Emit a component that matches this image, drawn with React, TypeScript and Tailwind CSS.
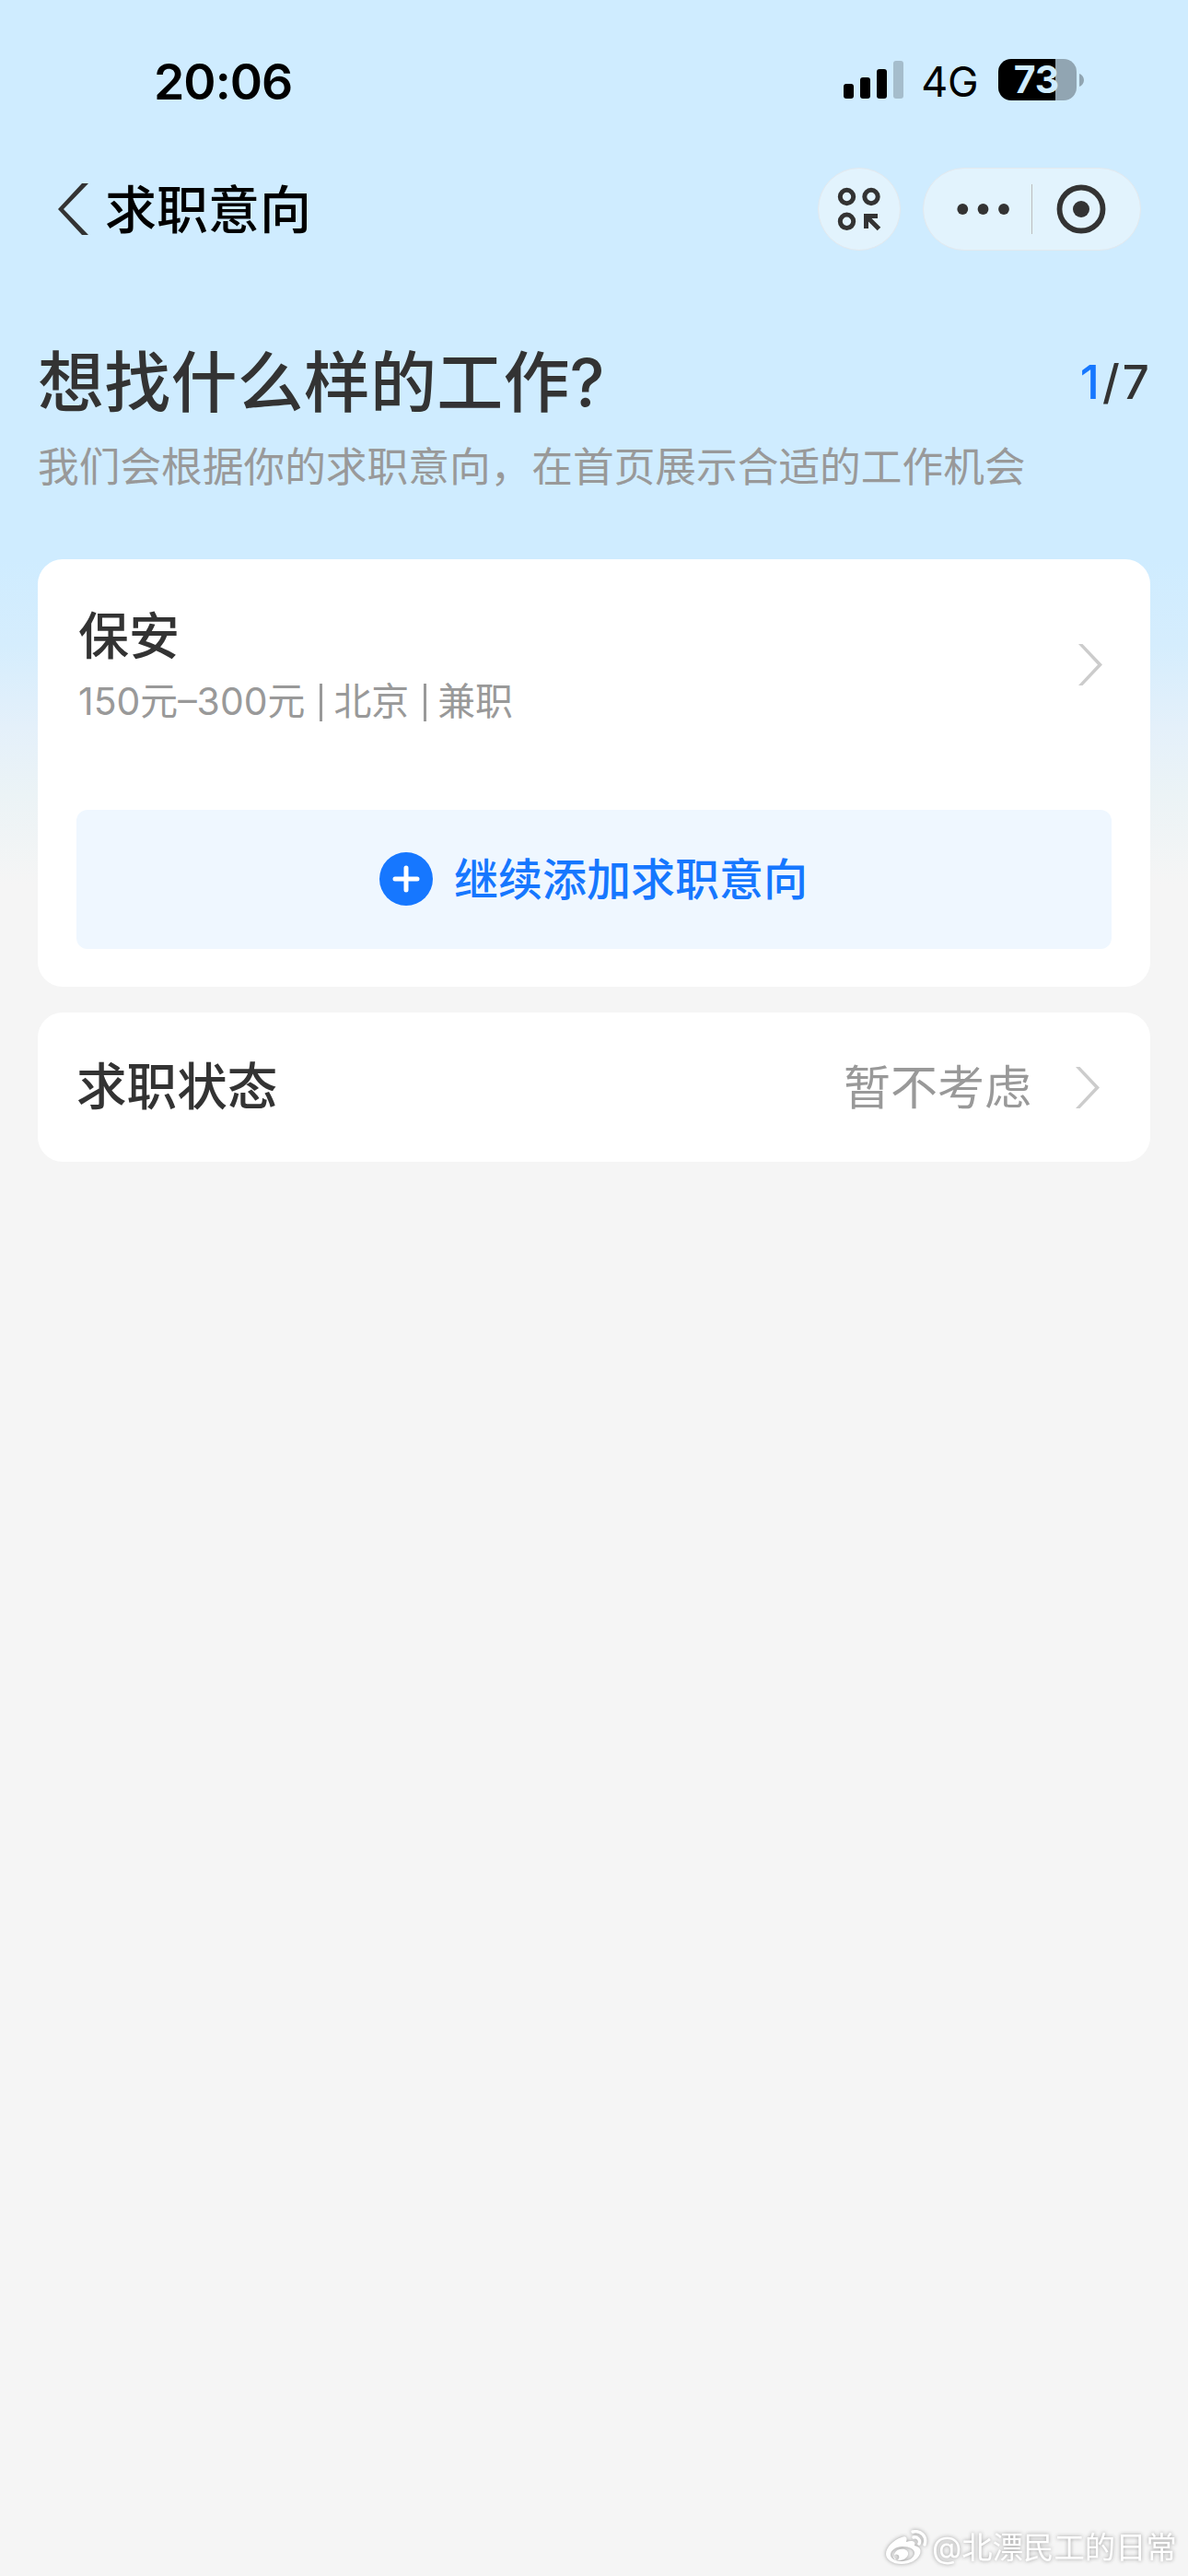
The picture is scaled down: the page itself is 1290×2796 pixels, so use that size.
import type { ReactNode } from "react";

const SignalIcon = () => (
  <svg width={65} height={41} viewBox="0 0 65 41">
    <rect x="0" y="25" width="11" height="16" rx="3" />
    <rect x="18" y="18" width="11" height="23" rx="3" />
    <rect x="36" y="9" width="11" height="32" rx="3" />
    <rect x="54" y="0" width="11" height="41" rx="3" fill="#a5bdcc" />
  </svg>
);

const Battery = ({ level }: { level: number }) => (
  <div className="flex items-center gap-[3px]">
    <div
      className="w-[85px] h-[45px] pr-[2px] rounded-[14px] flex items-center justify-center"
      style={{
        backgroundImage: `linear-gradient(90deg, #000 ${level}%, #91a5b2 ${level}%)`,
      }}
    >
      <span className="text-[41px] font-bold text-[#cfecff]">{level}</span>
    </div>
    <svg width={5} height={14} viewBox="0 0 5 14">
      <path d="M0 0C3 1 5 4 5 7s-2 6-5 7z" fill="#91a5b2" />
    </svg>
  </div>
);

const StatusBar = () => (
  <div className="h-[160px] flex items-start">
    <span className="ml-[167px] mt-[57px] text-[53.5px] leading-[64px] tracking-[-1px] font-semibold">
      20:06
    </span>
    <div className="ml-auto mr-[113px] mt-[64px] h-[45px] flex items-center">
      <SignalIcon />
      <span className="ml-[19px] mr-[22px] mt-[4px] text-[45px] leading-[45px] tracking-[-0.5px]">
        4G
      </span>
      <Battery level={73} />
    </div>
  </div>
);

const GridIcon = () => (
  <svg
    width={48}
    height={48}
    viewBox="0 0 48 48"
    fill="none"
    stroke="#333"
    strokeWidth="5"
  >
    <circle cx="10.5" cy="10.5" r="7.2" />
    <circle cx="37" cy="10.5" r="7.2" />
    <circle cx="10.5" cy="37.3" r="7.2" />
    <path d="M44 31.500H31.500V45M32 32l13.500 13.500" />
  </svg>
);

const NavBar = () => (
  <div className="h-[134px] flex items-center">
    <svg className="ml-[63px]" width={33} height={56} viewBox="0 0 33 56">
      <path d="M26 0h7L6 28l27 28h-7L0 28z" fill="#333" />
    </svg>
    <h1 className="ml-[18px] mt-[2px] text-[56px] leading-[80px] font-medium">
      求职意向
    </h1>
    <button className="ml-auto w-[90px] h-[90px] rounded-full bg-[#e2f3fd] border border-[#e3e9ee] flex items-center justify-center">
      <GridIcon />
    </button>
    <div className="ml-6 mr-[51px] w-[237px] h-[90px] rounded-full bg-[#e2f3fd] border border-[#e3e9ee] flex items-center">
      <svg className="ml-[36px]" width={58} height={12} viewBox="0 0 58 12">
        <circle cx="6.3" cy="6" r="5.9" fill="#333" />
        <circle cx="28.5" cy="6" r="5.9" fill="#333" />
        <circle cx="51" cy="6" r="5.9" fill="#333" />
      </svg>
      <div className="ml-[23px] w-px h-[54px] bg-[#bcbcbc]" />
      <svg className="ml-[26px]" width={54} height={54} viewBox="0 0 54 54">
        <circle
          cx="27"
          cy="27"
          r="23.5"
          fill="none"
          stroke="#333"
          strokeWidth="5.8"
        />
        <circle cx="27" cy="27" r="9" fill="#333" />
      </svg>
    </div>
  </div>
);

const ArrowRight = () => (
  <svg width={26} height={45} viewBox="0 0 26 45">
    <path d="M0 0h4.500L26 22.500 4.500 45H0l21-22.500z" fill="#ccc" />
  </svg>
);

const Card = ({ children }: { children: ReactNode }) => (
  <section className="mx-[41px] rounded-[27px] bg-white">{children}</section>
);

const Separator = () => (
  <div className="ml-4 mr-3 w-[3px] h-[41px] bg-[#999]" />
);

const WeiboIcon = () => (
  <svg width={45} height={38} viewBox="0 0 45 38" fill="#fff">
    <path
      fillRule="evenodd"
      d="M17 8c4-2 7 0 5 5 6-2 11-1 9 4 5 1 8 4 6 9-3 7-11 11-20 11C7 37 0 32 0 26 0 19 8 11 17 8zm1 10C11 18 5 22 5 27c0 4 5 7 12 7 8 0 14-4 14-9 0-4-5-7-13-7z"
    />
    <path
      fillRule="evenodd"
      d="M16 21c5-1 9 2 8 6-1 3-5 6-9 6s-7-3-6-6c1-4 4-6 7-6zm-3 6a3 3 0 1 0 0 5 3 3 0 0 0 0-5z"
    />
    <path
      d="M29 2c9-2 16 5 13 14M30 8c4-1 8 3 6 7"
      fill="none"
      stroke="#fff"
      strokeWidth="3.4"
      strokeLinecap="round"
    />
  </svg>
);

const App = () => {
  return (
    <div className="w-[1290px] h-[2796px] flex flex-col overflow-hidden bg-[#f5f5f5] bg-[linear-gradient(#cfecff_0px,#cfecff_607px,#d5edfd_700px,#e4f0fa_790px,#ebf3f6_860px,#f5f5f5_960px)] text-black font-[Inter,'Noto_Sans_CJK_SC',sans-serif]">
      <StatusBar />
      <NavBar />
      <header className="h-[313px] pt-[73px] pl-[41px] pr-[42px]">
        <div className="flex items-center justify-between h-[96px]">
          <h2 className="text-[72px] leading-[96px] tracking-[0.2px] font-medium text-[#333]">
            想找什么样的工作?
          </h2>
          <span className="mr-[-3px] text-[51px] leading-[96px] tracking-[3px] font-medium text-[#333]">
            <span className="text-[#1677ff]">1</span>/7
          </span>
        </div>
        <p className="mt-[12px] text-[44.7px] leading-[64px] text-[#999] whitespace-nowrap">
          我们会根据你的求职意向，在首页展示合适的工作机会
        </p>
      </header>
      <main className="flex flex-col gap-7">
        <Card>
          <div className="h-[464px] px-[42px] pt-[46px]">
            <div className="flex items-center justify-between h-[136px] pl-[2px] pr-[10px]">
              <div className="pt-[10px]">
                <h3 className="text-[55px] leading-[72px] font-medium text-[#333]">
                  保安
                </h3>
                <div className="flex items-center h-[72px] text-[40.9px] text-[#999]">
                  <span>150元–300元</span>
                  <Separator />
                  <span>北京</span>
                  <Separator />
                  <span>兼职</span>
                </div>
              </div>
              <ArrowRight />
            </div>
            <button className="mt-[90px] w-full h-[151px] pr-[1px] rounded-[12px] bg-[#eff7ff] flex items-center justify-center gap-[23px]">
              <svg
                className="mb-[1px]"
                width={58}
                height={58}
                viewBox="0 0 58 58"
              >
                <circle cx="29" cy="29" r="29" fill="#1677ff" />
                <path
                  d="M29 17v24M17 29h24"
                  stroke="#fff"
                  strokeWidth="5"
                  strokeLinecap="round"
                />
              </svg>
              <span className="text-[48px] leading-[64px] font-medium text-[#1677ff]">
                继续添加求职意向
              </span>
            </button>
          </div>
        </Card>
        <Card>
          <div className="h-[162px] pl-[42px] pr-[55px] flex items-center">
            <h3 className="mb-[2px] text-[54.6px] leading-[72px] font-medium text-[#333]">
              求职状态
            </h3>
            <span className="ml-auto mr-[48px] mt-[2px] text-[51px] leading-[72px] text-[#999]">
              暂不考虑
            </span>
            <ArrowRight />
          </div>
        </Card>
      </main>
      <footer className="mt-auto mb-[9px] pr-[12px] flex items-center justify-end gap-[5px] text-[33.4px] leading-[44px] text-white [filter:drop-shadow(0_0_2px_#999)]">
        <WeiboIcon />
        <span>@北漂民工的日常</span>
      </footer>
    </div>
  );
};

export default App;
